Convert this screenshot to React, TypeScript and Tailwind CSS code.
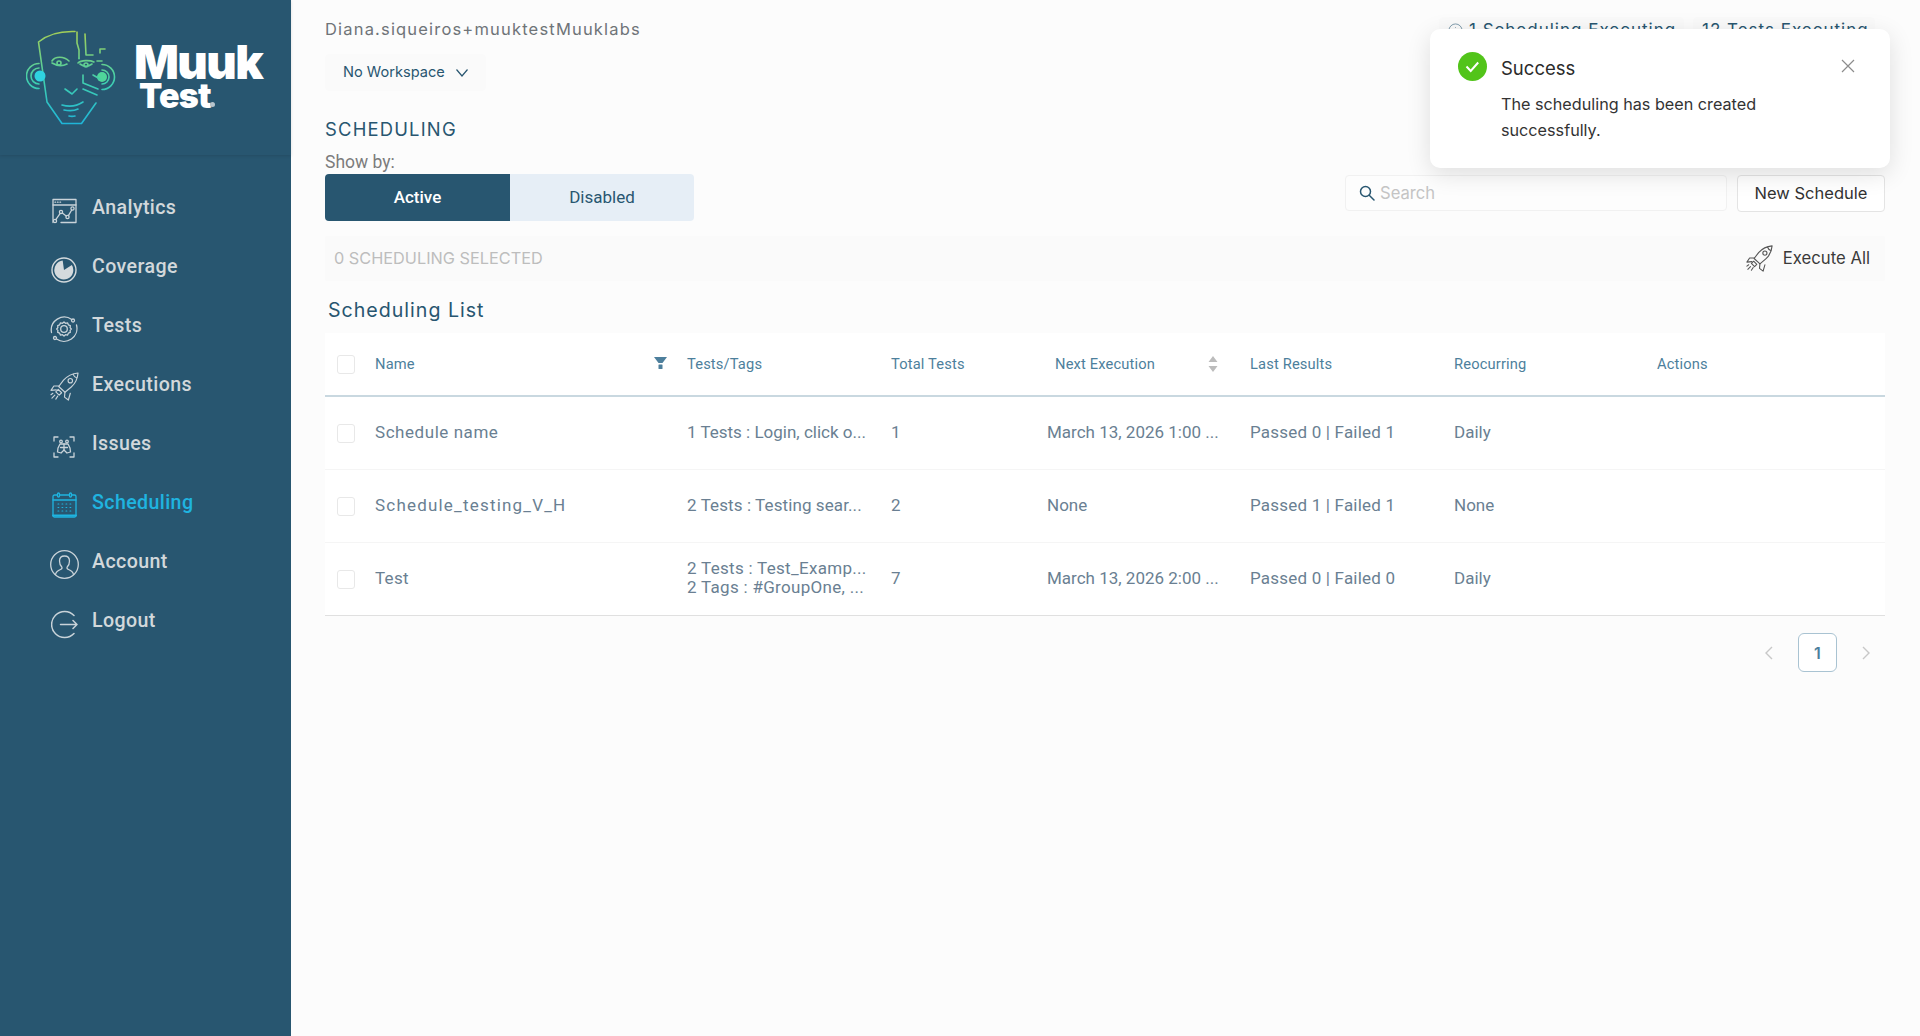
import React from "react";

const I = { fill: "none", stroke: "#c9d3d9", strokeWidth: 1.3, strokeLinecap: "round" as const, strokeLinejoin: "round" as const };

function Rocket({ className, color = "#c9d3d9" }: { className: string; color?: string }) {
  return (
    <svg viewBox="0 0 30 30" className={className} fill="none" stroke={color} strokeWidth={1.2} strokeLinecap="round" strokeLinejoin="round">
      <path d="M29 1c-6 .5-11 3-15 7.500l-5 6.500 6.500 6 6.500-5.500C26 12 28.500 7 29 1z" />
      <path d="M9.500 14.500 4 14.500 1 19l5.500-.5" />
      <path d="M15.500 20.500 15 26l4 3 2-7" />
      <circle cx="21" cy="9" r="2.300" />
      <path d="M24 2.500c.5 1.500 2 3 3.500 3.500" />
      <path d="M8.500 18 12 21.500 9.500 24 6 20.500z" />
      <path d="M5 24l-3 3M8 25l-2 3M3 22l-2 1.500" />
    </svg>
  );
}

const navIcons: Record<string, React.ReactNode> = {
  Analytics: (
    <svg viewBox="0 0 25 26" className="w-[25px] h-[26px]" {...I}>
      <path d="M1 24.500V1.500h23v23H9" />
      <path d="M1 7h23" />
      <path d="M3 4.200h.6M5.500 4.200h.6M8 4.200h.6" />
      <circle cx="3" cy="23" r="1.600" />
      <circle cx="9" cy="14" r="1.600" />
      <circle cx="15.500" cy="19" r="1.600" />
      <circle cx="20.500" cy="10.500" r="1.600" />
      <path d="M3.800 21.600 8.200 15.400M10.300 15 14.200 18M16.400 17.600 19.700 12" />
    </svg>
  ),
  Coverage: (
    <svg viewBox="0 0 26 26" className="w-[26px] h-[26px]">
      <circle cx="13" cy="13" r="12" fill="none" stroke="#d4dadd" strokeWidth="1.400" />
      <path d="M13 13 L21.500 9.200 A9.500 9.500 0 1 1 13 3.500 Z" fill="#d4dadd" transform="rotate(-8 13 13)" />
    </svg>
  ),
  Tests: (
    <svg viewBox="0 0 28 28" className="w-[28px] h-[28px]" {...I}>
      <path d="M14 7l1.500 1.300 2-.4.900 1.900 1.900.8-.2 2L21.300 14l-1.200 1.400.2 2-1.900.8-.9 1.900-2-.4L14 21l-1.500-1.300-2 .4-.9-1.900-1.900-.8.2-2L6.700 14l1.200-1.400-.2-2 1.900-.8.900-1.900 2 .4z" />
      <circle cx="14" cy="14" r="3.300" />
      <path d="M21.800 4.500A13 13 0 0 0 1.500 17.500" />
      <path d="M6.500 24A13 13 0 0 0 26.500 10" />
      <circle cx="23" cy="5.500" r="1.500" />
      <circle cx="5" cy="23" r="1.500" />
    </svg>
  ),
  Executions: <Rocket className="w-[29px] h-[29px]" />,
  Issues: (
    <svg viewBox="0 0 22 22" className="w-[22px] h-[22px]" {...I}>
      <path d="M1 5V1h4M17 1h4v4M21 17v4h-4M5 21H1v-4" />
      <circle cx="8" cy="5.500" r="1.300" />
      <circle cx="14" cy="5.500" r="1.300" />
      <path d="M7 8h8l2 4 .5 4-3.500 1-3-3-3 3-3.500-1 .5-4z" />
      <path d="M11 8v6M7.500 11.500h7" />
    </svg>
  ),
  Scheduling: (
    <svg viewBox="0 0 25 26" className="w-[25px] h-[26px]" fill="none" stroke="#1fb4e0" strokeWidth="1.300" strokeLinecap="round">
      <rect x="1" y="3" width="23" height="22" rx="1.500" />
      <path d="M1 8h23" />
      <path d="M1 23.500h23" strokeWidth="2" />
      <rect x="5.500" y="1" width="2" height="4" rx="1" fill="#285670" />
      <rect x="17.500" y="1" width="2" height="4" rx="1" fill="#285670" />
      <path d="M6 12h.8M10 12h.8M14 12h.8M18 12h.8M6 15.500h.8M10 15.500h.8M14 15.500h.8M18 15.500h.8M6 19h.8M10 19h.8M14 19h.8M18 19h.8" strokeWidth="1.100" />
    </svg>
  ),
  Account: (
    <svg viewBox="0 0 29 29" className="w-[29px] h-[29px]" {...I}>
      <circle cx="14.500" cy="14.500" r="13.800" />
      <path d="M5.500 24.500c.5-3 2.500-4 5-5 1.500-.6 1.800-1.500 1.300-2.500-1.500-1.500-2.300-3.500-2.300-6 0-3 2-5 5-5s5 2 5 5c0 2.500-.8 4.500-2.300 6-.5 1-.2 1.900 1.300 2.500 2.500 1 4.500 2 5 5" />
    </svg>
  ),
  Logout: (
    <svg viewBox="0 0 27 29" className="w-[27px] h-[29px]" fill="none" stroke="#c9d3d9" strokeWidth="1.500" strokeLinecap="round" strokeLinejoin="round">
      <path d="M23 5.500A13 13 0 1 0 23 23.500" />
      <path d="M9.500 14.500H26M22 10.500l4 4-4 4" />
    </svg>
  ),
};

const nav: [string, string][] = [
  ["Analytics", "mt-[6px]"],
  ["Coverage", "mt-[7px]"],
  ["Tests", "mt-[7px]"],
  ["Executions", "mt-[4px]"],
  ["Issues", "mt-[7px]"],
  ["Scheduling", "mt-[5px]"],
  ["Account", "mt-[6px]"],
  ["Logout", "mt-[7px]"],
];

const rows = [
  { name: "Schedule name", nameCls: "tracking-[0.55px]", testCls: "", tests: ["1 Tests : Login, click o..."], total: "1", next: "March 13, 2026 1:00 ...", last: "Passed 0 | Failed 1", rec: "Daily" },
  { name: "Schedule_testing_V_H", nameCls: "tracking-[1.2px]", testCls: "tracking-[0.1px]", tests: ["2 Tests : Testing sear..."], total: "2", next: "None", last: "Passed 1 | Failed 1", rec: "None" },
  { name: "Test", nameCls: "tracking-[0.3px]", testCls: "tracking-[0.3px] mb-[2px]", tests: ["2 Tests : Test_Examp...", "2 Tags : #GroupOne, ..."], total: "7", next: "March 13, 2026 2:00 ...", last: "Passed 0 | Failed 0", rec: "Daily" },
];

const cols = "grid grid-cols-[38px_312px_204px_156px_203px_204px_203px_228px] items-center";

function Box() {
  return <div className="w-[18px] h-[19px] rounded-[3px] border border-[#e8e8e8] bg-white" />;
}

export default function App() {
  return (
    <div className="flex w-[1920px] h-[1036px] overflow-hidden bg-[#fcfcfc] font-['Inter',sans-serif]">
      <aside className="w-[291px] shrink-0 bg-[#285670] flex flex-col">
        <div className="h-[155px] shrink-0 pl-[26px] pt-[28px] flex items-start shadow-[0_1px_3px_rgba(0,0,0,0.12)]">
          <svg viewBox="26 28 94 100" className="w-[94px] h-[100px]" fill="none" stroke="url(#face)" strokeWidth="1.600" strokeLinecap="round" strokeLinejoin="round">
            <defs>
              <linearGradient id="face" gradientUnits="userSpaceOnUse" x1="0" y1="30" x2="0" y2="124">
                <stop offset="0" stopColor="#a5cf55" />
                <stop offset="0.55" stopColor="#3fcfb0" />
                <stop offset="1" stopColor="#1fb5d8" />
              </linearGradient>
            </defs>
            <path d="M75 31.500C60 31 48 34 38.500 42L47 102l15 21.500h19.500L96 103" />
            <path d="M39 63.500a12.500 12.500 0 0 0 0 25" />
            <path d="M39 68a8 8 0 0 0 0 16" />
            <circle cx="40" cy="76" r="5.500" fill="#2fd3e0" stroke="none" />
            <path d="M102 64.500a12.500 12.500 0 0 1 0 25" />
            <path d="M102 70a7 7 0 0 1 0 14" />
            <circle cx="102" cy="77" r="5" fill="#4fd69a" stroke="none" />
            <path d="M77 32v11l2 7v8" />
            <circle cx="79" cy="58.500" r="1" fill="#5cc98a" stroke="none" />
            <path d="M85 34l1 21h7" />
            <path d="M100 53v-4h5M97 61h5" />
            <path d="M52 61c3-5 12-5 17 0M52 63c5 3 11 3 15 1" />
            <circle cx="59" cy="63" r="2" />
            <path d="M78 63c3-3 12-3 16-1M80 64c4 3 8 3 12 0" />
            <circle cx="86" cy="65" r="2" />
            <path d="M83 75v8l15 6M93 75l7 4M83 89l14 6" />
            <path d="M65 89l7 5 5-5" />
            <path d="M62 105c7 2 15 1 21-3M64 110c5 1 10 1 14-1M69 116c2 .5 4 .5 6 0" />
          </svg>
          <div className="ml-[14px] mt-[15px] text-white relative">
            <div className="h-[38px] text-[47px] leading-[38px] font-black tracking-[-1.6px]">Muuk</div>
            <div className="h-[30px] ml-[5px] text-[34px] leading-[30px] font-black tracking-[-0.8px]">Test</div>
            <div className="absolute left-[76px] top-[59px] w-[5px] h-[5px] rounded-full bg-[#b7c4cc]" />
          </div>
        </div>
        <nav className="pt-[23px]">
          {nav.map(([label, offset]) => (
            <div key={label} className="h-[59px] flex items-center">
              <div className={`w-[92px] shrink-0 pl-[49px] ${offset}`}>
                <div className="w-[30px] flex justify-center">{navIcons[label]}</div>
              </div>
              <span className={`text-[19.6px] font-medium font-['Roboto',sans-serif] tracking-[0.4px] ${label === "Scheduling" ? "text-[#1fb4e0]" : "text-[#d2d8db]"}`}>{label}</span>
            </div>
          ))}
        </nav>
      </aside>

      <main className="flex-1 min-w-0 pl-[34px] pr-[35px] relative">
        <div className="flex justify-between items-start pt-[17px] h-[54px]">
          <div className="text-[16.5px] leading-[24px] tracking-[1.18px] text-[#6f7478]">Diana.siqueiros+muuktestMuuklabs</div>
          <div className="flex gap-[9px] mr-[10px] text-[#285670] text-[17px] leading-[26px] tracking-[1px]">
            <div className="h-[36px] w-[245px] bg-[#fafafa] rounded-[4px] flex items-start gap-[6px] pl-[9px]">
              <svg viewBox="0 0 16 16" className="w-[15px] h-[15px] mt-[6px] shrink-0" fill="none" stroke="#7a98a9" strokeWidth="1"><circle cx="8" cy="8" r="7" /><path d="M8 7v4.500M8 4.500v.8" /></svg>
              <span>1 Scheduling Executing</span>
            </div>
            <div className="h-[36px] w-[182px] bg-[#fafafa] rounded-[4px] pl-[9px]">12 Tests Executing</div>
          </div>
        </div>
        <button className="w-[161px] h-[37px] bg-[#fafafa] rounded-[4px] flex items-center pl-[18px] text-[14.6px] text-[#285670]">
          No Workspace
          <svg viewBox="0 0 14 14" className="w-[14px] h-[14px] ml-[10px]" fill="none" stroke="#285670" strokeWidth="1.200"><path d="M1.500 3.500 7 10l5.500-6.500" /></svg>
        </button>
        <h1 className="mt-[26px] text-[18.4px] leading-[24px] tracking-[1.2px] text-[#285670] font-normal">SCHEDULING</h1>
        <div className="mt-[10px] text-[17.5px] leading-[22px] text-[#7c7c7c] font-['Roboto',sans-serif]">Show by:</div>
        <div className="flex justify-between items-start h-[47px] mt-[1px]">
          <div className="flex w-[369px] h-[47px] text-[17px] font-['Roboto',sans-serif]">
            <div className="w-[185px] bg-[#285670] text-white rounded-l-[4px] flex items-center justify-center font-medium">Active</div>
            <div className="flex-1 bg-[#e6eef6] text-[#285670] rounded-r-[4px] flex items-center justify-center">Disabled</div>
          </div>
          <div className="flex gap-[10px] mt-[1px]">
            <div className="w-[382px] h-[36px] bg-[#fdfdfd] border border-[#f1f1f1] rounded-[4px] flex items-center pl-[13px] gap-[5px] text-[16.6px] text-[#c4c4c4]">
              <svg viewBox="0 0 16 16" className="w-[16px] h-[16px]" fill="none" stroke="#285670" strokeWidth="1.500" strokeLinecap="round"><circle cx="6.500" cy="6.500" r="5" /><path d="M10.500 10.500 15 15" /></svg>
              Search
            </div>
            <button className="w-[148px] h-[37px] bg-white border border-[#e4e4e4] rounded-[4px] text-[16.5px] text-[#333]">New Schedule</button>
          </div>
        </div>
        <div className="mt-[15px] h-[45px] bg-[#fafafa] rounded-[2px] flex items-center justify-between pl-[9px] pr-[15px]">
          <span className="text-[16.3px] text-[#bdbdbd]">0 SCHEDULING SELECTED</span>
          <span className="flex items-center gap-[10px] text-[16.7px] text-[#3a3a3a]"><Rocket className="w-[27px] h-[27px]" color="#555" />Execute All</span>
        </div>
        <h2 className="ml-[3px] mt-[17px] h-[35px] text-[19.6px] leading-[24px] tracking-[1px] text-[#285670] font-normal">Scheduling List</h2>

        <div className="bg-white font-['Roboto',sans-serif] text-[17px] text-[#6a7f92]">
          <div className={`${cols} h-[64px] border-b-2 border-[#c9d8e0] text-[14.7px] tracking-[0.15px] text-[#4d7f9c] pl-[12px]`}>
            <Box />
            <div className="flex justify-between items-center pr-[20px]">
              <span>Name</span>
              <svg viewBox="0 0 13 13" className="w-[13px] h-[13px]" fill="#4d7f9c"><path d="M0 0h13L8.500 6H4.500z" /><rect x="4.500" y="7.500" width="4" height="4.500" rx="0.500" /></svg>
            </div>
            <span>Tests/Tags</span>
            <span>Total Tests</span>
            <div className="flex items-center justify-between pl-[8px] pr-[32px]">
              <span>Next Execution</span>
              <svg viewBox="0 0 10 18" className="w-[10px] h-[18px]" fill="#bcbcbc"><path d="M5 1 9.500 7h-9zM5 17 .5 11h9z" /></svg>
            </div>
            <span>Last Results</span>
            <span>Reocurring</span>
            <span>Actions</span>
          </div>
          {rows.map((r, i) => (
            <div key={r.name} className={`${cols} h-[73px] pl-[12px] border-b ${i === 2 ? "border-[#e0e0e0]" : "border-[#f5f5f5]"}`}>
              <Box />
              <span className={r.nameCls}>{r.name}</span>
              <div className={`leading-[19.500px] ${r.testCls}`}>{r.tests.map((t) => <div key={t}>{t}</div>)}</div>
              <span>{r.total}</span>
              <span>{r.next}</span>
              <span className="tracking-[0.2px]">{r.last}</span>
              <span>{r.rec}</span>
              <span />
            </div>
          ))}
        </div>

        <div className="flex justify-end items-center mt-[17px] text-[#c8c8c8] gap-[24px] pr-[14px]">
          <svg viewBox="0 0 10 14" className="w-[10px] h-[14px]" fill="none" stroke="#c8c8c8" strokeWidth="1.400"><path d="M8 1 2 7l6 6" /></svg>
          <div className="w-[39px] h-[39px] rounded-[6px] border border-[#a9c3d2] bg-white flex items-center justify-center text-[16px] font-semibold text-[#4d7f9c]">1</div>
          <svg viewBox="0 0 10 14" className="w-[10px] h-[14px]" fill="none" stroke="#c8c8c8" strokeWidth="1.400"><path d="M2 1l6 6-6 6" /></svg>
        </div>

        <div className="absolute left-[1139px] top-[29px] w-[460px] h-[139px] bg-white rounded-[10px] shadow-[0_6px_24px_rgba(0,0,0,0.12)] pl-[71px] pr-[20px] pt-[25px] text-[#333]">
          <svg viewBox="0 0 29 29" className="absolute left-[28px] top-[23px] w-[29px] h-[29px]">
            <circle cx="14.500" cy="14.500" r="14.500" fill="#52c41a" />
            <path d="M8.500 14.500l4.200 4.500 7.500-8.500" fill="none" stroke="#fff" strokeWidth="2" />
          </svg>
          <svg viewBox="0 0 14 14" className="absolute left-[411px] top-[30px] w-[14px] h-[14px]" fill="none" stroke="#8c8c8c" strokeWidth="1.200"><path d="M1 1l12 12M13 1 1 13" /></svg>
          <div className="text-[18.5px] leading-[28px] text-[#2b2b2b]">Success</div>
          <div className="mt-[9px] text-[16.2px] leading-[26px] w-[300px]">The scheduling has been created successfully.</div>
        </div>
      </main>
    </div>
  );
}
